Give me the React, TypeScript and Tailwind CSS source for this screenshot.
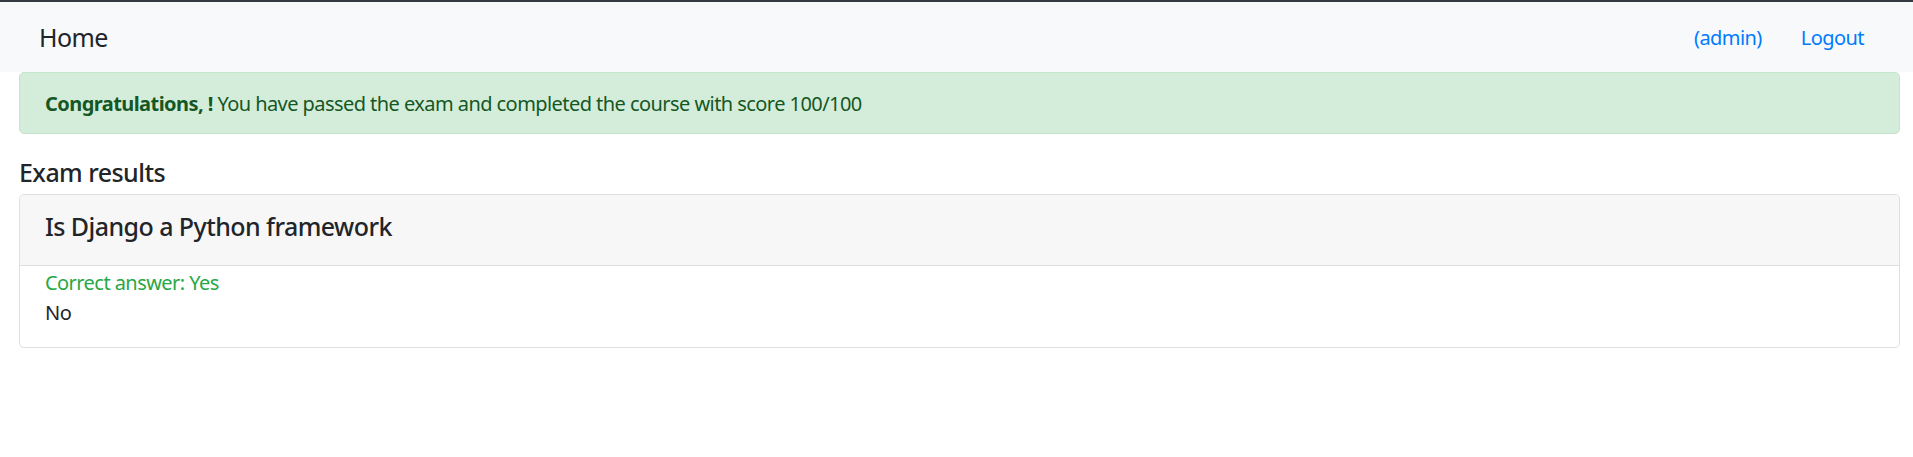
export default function App() {
  return (
    <div className="min-h-[457px] bg-white text-[#212529] font-['Noto_Sans',sans-serif] tracking-[-0.035em]">
      <div className="h-[2px] bg-[#343a40]" />
      <nav className="h-[70px] bg-[#f8f9fa] px-[20px] flex items-center">
        <div className="flex-1 flex items-center justify-between px-[19px] pt-[1px]">
          <a className="text-[25px] leading-[37px] text-[#212529]">Home</a>
          <div className="flex items-center gap-[19px] text-[20px] leading-[30px] text-[#007bff]">
            <a className="px-[10px]">(admin)</a>
            <a className="px-[10px]">Logout</a>
          </div>
        </div>
      </nav>

      <div className="pl-[19px] pr-[13px] text-[20px] leading-[30px]">
        <div className="mb-[20px] rounded-[5px] border border-[#c3e6cb] bg-[#d4edda] px-[25px] pt-[16px] pb-[14px] text-[#155724]">
          <b className="font-bold">Congratulations, !</b> You have passed the exam and completed the course with score 100/100
        </div>

        <h5 className="pt-[3px] mb-[7px] text-[25px] leading-[30px] font-medium">Exam results</h5>

        <div className="rounded-[5px] border border-[#dfdfdf]">
          <div className="rounded-t-[5px] border-b border-[#dfdfdf] bg-[#f7f7f7] px-[25px] pt-[16px] pb-[14px]">
            <h5 className="mb-[10px] text-[25px] leading-[30px] font-medium">Is Django a Python framework</h5>
          </div>
          <div className="px-[25px] pt-[2px] pb-[19px]">
            <div className="text-[#28a745]">Correct answer: Yes</div>
            <div>No</div>
          </div>
        </div>
      </div>
    </div>
  )
}
